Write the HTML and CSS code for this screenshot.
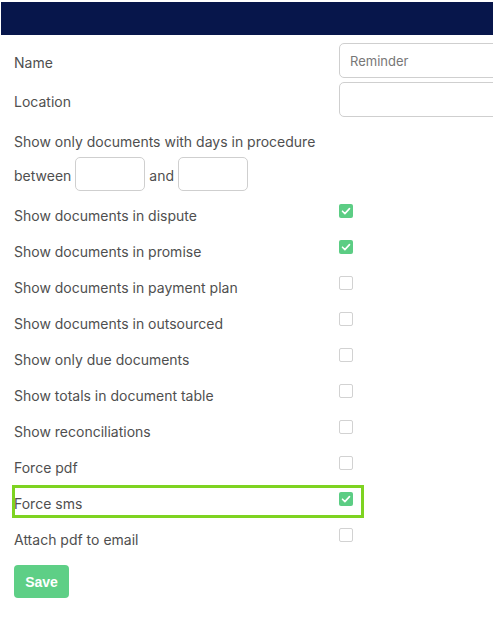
FILE: index.html
```html
<!DOCTYPE html>
<html>
<head>
    <meta charset="UTF-8">
    <title>Reminder</title>
    <link rel="stylesheet" href="styles.css">
</head>
<body>
    <div class="topbar"></div>
    <form class="form">
        <div class="row field">
            <label class="label">Name</label>
            <input class="text" type="text" value="Reminder">
        </div>
        <div class="row field">
            <label class="label">Location</label>
            <input class="text" type="text">
        </div>
        <div class="days">Show only documents with days in procedure</div>
        <div class="between">
            <span>between</span>
            <input class="small" type="text">
            <span>and</span>
            <input class="small" type="text">
        </div>

        <div class="row check"><span class="label">Show documents in dispute</span><span class="box on"><svg viewBox="0 0 14 14"><path d="M3.5 7.2l2.4 2.4 4.6-5"/></svg></span></div>
        <div class="row check"><span class="label">Show documents in promise</span><span class="box on"><svg viewBox="0 0 14 14"><path d="M3.5 7.2l2.4 2.4 4.6-5"/></svg></span></div>
        <div class="row check"><span class="label">Show documents in payment plan</span><span class="box"></span></div>
        <div class="row check"><span class="label">Show documents in outsourced</span><span class="box"></span></div>
        <div class="row check"><span class="label">Show only due documents</span><span class="box"></span></div>
        <div class="row check"><span class="label">Show totals in document table</span><span class="box"></span></div>
        <div class="row check"><span class="label">Show reconciliations</span><span class="box"></span></div>
        <div class="row check"><span class="label">Force pdf</span><span class="box"></span></div>
        <div class="row check mark"><span class="label">Force sms</span><span class="box on"><svg viewBox="0 0 14 14"><path d="M3.5 7.2l2.4 2.4 4.6-5"/></svg></span></div>
        <div class="row check"><span class="label">Attach pdf to email</span><span class="box"></span></div>

        <button class="save" type="button">Save</button>
    </form>
</body>
</html>
```

FILE: styles.css
```css
*, *::after{
    padding: 0;
    margin: 0;
    box-sizing: border-box;
}
body{
    font-family: Inter, "Liberation Sans", sans-serif;
    font-size: 14px;
    color: #4f4f4f;
    background: #fff;
    padding-top: 2px;
    overflow: hidden;
}
.topbar{
    height: 33px;
    margin-left: 1px;
    background: #07164b;
}
.form{
    padding: 8px 0 0 14px;
}
.row{
    display: flex;
}
.label{
    width: 325px;
    flex: none;
}
.field{
    height: 35px;
    align-items: center;
    margin-bottom: 4px;
}
.field .label{
    padding-top: 4px;
}
.text{
    width: 170px;
    height: 35px;
    border: 1px solid #cfcfcf;
    border-radius: 5px;
    padding: 0 10px;
    font-family: Inter, "Liberation Sans", sans-serif;
    font-size: 13px;
    color: #777;
    outline: none;
}
.days{
    line-height: 30px;
    margin-top: 10px;
}
.between{
    display: flex;
    align-items: center;
    height: 34px;
}
.between span{
    padding-top: 3px;
}
.small{
    width: 70px;
    height: 34px;
    border: 1px solid #cfcfcf;
    border-radius: 5px;
    margin: 0 4px;
    outline: none;
}
.check{
    height: 36px;
    line-height: 36px;
    width: 350px;
    position: relative;
}
.check .label{
    padding-top: 1px;
}
.between + .check{
    margin-top: 6px;
}
.box{
    width: 14px;
    height: 14px;
    margin-top: 7px;
    border: 1.5px solid #d2d2d2;
    border-radius: 2px;
    background: #fff;
}
.box.on{
    border: none;
    background: #5ccd84;
}
.box svg{
    display: block;
    width: 14px;
    height: 14px;
    fill: none;
    stroke: #fff;
    stroke-width: 1.6;
    stroke-linecap: round;
    stroke-linejoin: round;
}
.mark::after{
    content: "";
    position: absolute;
    left: -2px;
    top: 0;
    width: 352px;
    height: 33px;
    border: 3px solid #7ed321;
}
.save{
    margin-top: 8px;
    width: 55px;
    height: 33px;
    border: none;
    border-radius: 4px;
    background: #5ecf86;
    color: #fff;
    font-family: "Liberation Sans", Arial, sans-serif;
    font-size: 14px;
    font-weight: bold;
}
```
